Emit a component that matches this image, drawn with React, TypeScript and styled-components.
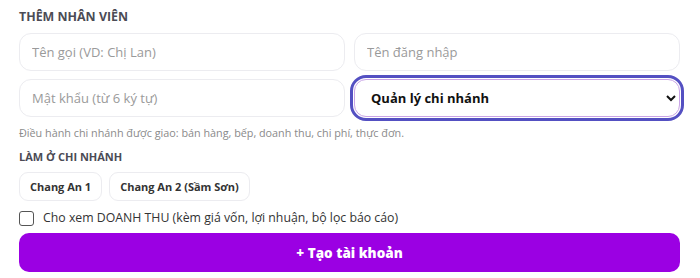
import React from "react";
import styled, { createGlobalStyle } from "styled-components";

const Global = createGlobalStyle`
  html, body { margin: 0; padding: 0; background: #ffffff; }
  body { font-family: "Open Sans", "Noto Sans", sans-serif; }
  * { box-sizing: border-box; }
`;

const Card = styled.div`
  width: 700px;
  height: 278px;
  padding: 9px 20px 0 19px;
  display: flex;
  flex-direction: column;
  background: #fff;
`;

const Title = styled.div`
  font-size: 12.4px;
  line-height: 16px;
  font-weight: 700;
  color: #4b4b55;
  margin-bottom: 8px;
`;

const Grid = styled.div`
  display: grid;
  grid-template-columns: 1fr 1fr;
  column-gap: 9px;
  row-gap: 8px;
`;

const Input = styled.input`
  height: 38px;
  width: 100%;
  border: 1px solid #ececf0;
  border-radius: 12px;
  padding: 0 12px;
  font-family: "Open Sans", sans-serif;
  font-size: 13px;
  color: #333;
  background: #fff;
  outline: none;
  &::placeholder { color: #9a9a9a; }
`;

const Select = styled.select<{ $focused?: boolean }>`
  height: 38px;
  width: 100%;
  border: 1px solid ${(p) => (p.$focused ? "#c9a4e6" : "#ececf0")};
  border-radius: 12px;
  padding: 0 10px 0 12px;
  font-family: "Open Sans", sans-serif;
  font-size: 13px;
  font-weight: 700;
  color: #111;
  background: #fff;
  outline: ${(p) => (p.$focused ? "3px solid #5450c2" : "none")};
  outline-offset: 1px;
`;

const Hint = styled.div`
  margin-top: 8px;
  font-size: 10.8px;
  line-height: 16px;
  color: #8a8a8a;
`;

const SubTitle = styled.div`
  margin-top: 8px;
  font-size: 11px;
  line-height: 16px;
  font-weight: 700;
  color: #4b4b55;
`;

const Chips = styled.div`
  display: flex;
  gap: 7px;
  margin-top: 7px;
`;

const Chip = styled.button`
  height: 29px;
  padding: 0 10px;
  border: 1px solid #ececf0;
  border-radius: 9px;
  background: #fff;
  font-family: "Open Sans", sans-serif;
  font-size: 11px;
  font-weight: 700;
  color: #333;
`;

const CheckRow = styled.label`
  display: flex;
  align-items: center;
  gap: 9px;
  margin-top: 9px;
  font-size: 12.3px;
  line-height: 16px;
  color: #333;
`;

const Box = styled.span`
  width: 15px;
  height: 15px;
  border: 1px solid #555;
  border-radius: 3px;
  background: #fff;
  flex: none;
`;

const Submit = styled.button`
  margin-top: 7px;
  height: 39px;
  width: 100%;
  border: none;
  border-radius: 10px;
  background: #9b00e3;
  color: #fff;
  font-family: "Open Sans", sans-serif;
  font-size: 13.5px;
  font-weight: 800;
`;

export default function App() {
  return (
    <>
      <Global />
      <Card>
        <Title>THÊM NHÂN VIÊN</Title>
        <Grid>
          <Input placeholder="Tên gọi (VD: Chị Lan)" />
          <Input placeholder="Tên đăng nhập" />
          <Input placeholder="Mật khẩu (từ 6 ký tự)" />
          <Select $focused defaultValue="manager">
            <option value="manager">Quản lý chi nhánh</option>
            <option value="staff">Nhân viên</option>
          </Select>
        </Grid>
        <Hint>Điều hành chi nhánh được giao: bán hàng, bếp, doanh thu, chi phí, thực đơn.</Hint>
        <SubTitle>LÀM Ở CHI NHÁNH</SubTitle>
        <Chips>
          <Chip>Chang An 1</Chip>
          <Chip>Chang An 2 (Sầm Sơn)</Chip>
        </Chips>
        <CheckRow>
          <Box />
          Cho xem DOANH THU (kèm giá vốn, lợi nhuận, bộ lọc báo cáo)
        </CheckRow>
        <Submit>+ Tạo tài khoản</Submit>
      </Card>
    </>
  );
}
